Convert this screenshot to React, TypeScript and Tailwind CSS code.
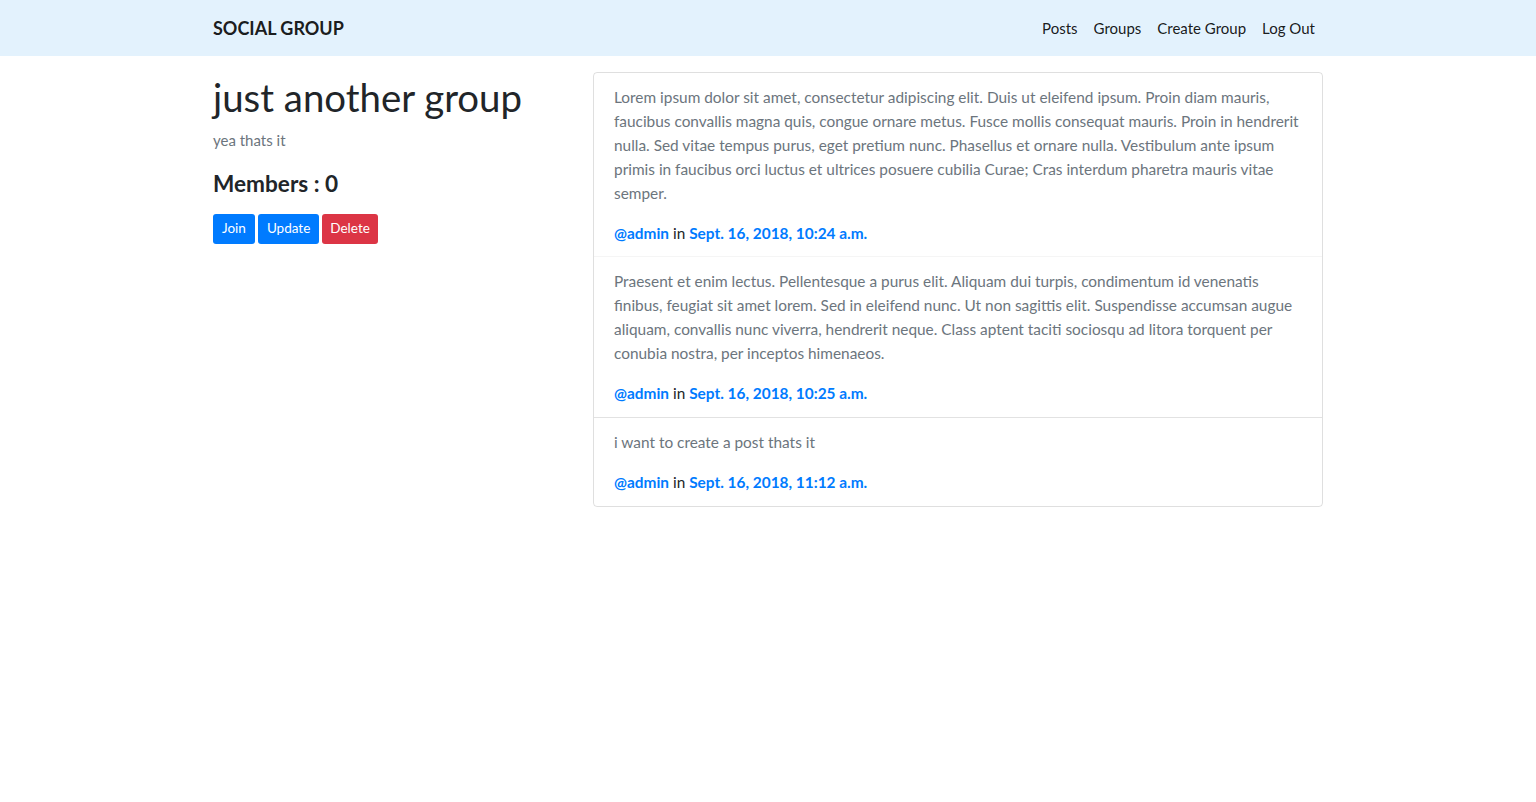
const posts = [
  {
    lines: [
      "Lorem ipsum dolor sit amet, consectetur adipiscing elit. Duis ut eleifend ipsum. Proin diam mauris,",
      "faucibus convallis magna quis, congue ornare metus. Fusce mollis consequat mauris. Proin in hendrerit",
      "nulla. Sed vitae tempus purus, eget pretium nunc. Phasellus et ornare nulla. Vestibulum ante ipsum",
      "primis in faucibus orci luctus et ultrices posuere cubilia Curae; Cras interdum pharetra mauris vitae",
      "semper.",
    ],
    date: "Sept. 16, 2018, 10:24 a.m.",
    border: "pb-[11px] border-b border-[#f5f5f5]",
  },
  {
    lines: [
      "Praesent et enim lectus. Pellentesque a purus elit. Aliquam dui turpis, condimentum id venenatis",
      "finibus, feugiat sit amet lorem. Sed in eleifend nunc. Ut non sagittis elit. Suspendisse accumsan augue",
      "aliquam, convallis nunc viverra, hendrerit neque. Class aptent taciti sociosqu ad litora torquent per",
      "conubia nostra, per inceptos himenaeos.",
    ],
    date: "Sept. 16, 2018, 10:25 a.m.",
    border: "pb-3 border-b border-[#e2e2e2]",
  },
  {
    lines: ["i want to create a post thats it"],
    date: "Sept. 16, 2018, 11:12 a.m.",
    border: "pb-3",
  },
];

export default function App() {
  return (
    <div className="min-h-screen bg-white font-['Lato',sans-serif] text-[#212529]">
      <nav className="h-14 bg-[#e3f2fd]">
        <div className="mx-auto flex h-full w-[1140px] items-center justify-between px-[15px]">
          <span className="text-[18px] font-bold text-black/90">SOCIAL GROUP</span>
          <div className="flex items-center text-[15px] text-black/90">
            <a className="px-2">Posts</a>
            <a className="px-2">Groups</a>
            <a className="px-2">Create Group</a>
            <a className="px-2">Log Out</a>
          </div>
        </div>
      </nav>

      <main className="mx-auto flex w-[1140px] pt-4">
        <section className="w-[380px] px-[15px]">
          <h1 className="mt-[1px] text-[38.4px] leading-[48px] text-[#212529]">just another group</h1>
          <p className="mt-[8px] text-[15px] text-[#6c757d]">yea thats it</p>
          <h4 className="mt-[18px] text-[22.6px] font-bold leading-[28px]">Members : 0</h4>
          <div className="mt-[16px] flex gap-[3px]">
            <button className="h-[30px] rounded-[3px] bg-[#007bff] px-[9px] text-[13.5px] text-white">Join</button>
            <button className="h-[30px] rounded-[3px] bg-[#007bff] px-[9px] text-[13.5px] text-white">Update</button>
            <button className="h-[30px] rounded-[3px] bg-[#dc3545] px-[8px] text-[13.5px] text-white">Delete</button>
          </div>
        </section>

        <section className="w-[760px] px-[15px]">
          <ul className="overflow-hidden rounded border border-black/[.125]">
            {posts.map((p) => (
              <li key={p.date} className={`px-5 pt-3 ${p.border}`}>
                <p className="text-[15.4px] leading-6 text-[#6c757d]">
                  {p.lines.map((l, i) => (
                    <span key={i} className="block whitespace-nowrap">
                      {l}
                    </span>
                  ))}
                </p>
                <p className="mt-4 text-[15.4px] leading-6">
                  <a className="font-bold text-[#007bff]">@admin</a> in{" "}
                  <a className="font-bold text-[#007bff]">{p.date}</a>
                </p>
              </li>
            ))}
          </ul>
        </section>
      </main>
    </div>
  );
}
